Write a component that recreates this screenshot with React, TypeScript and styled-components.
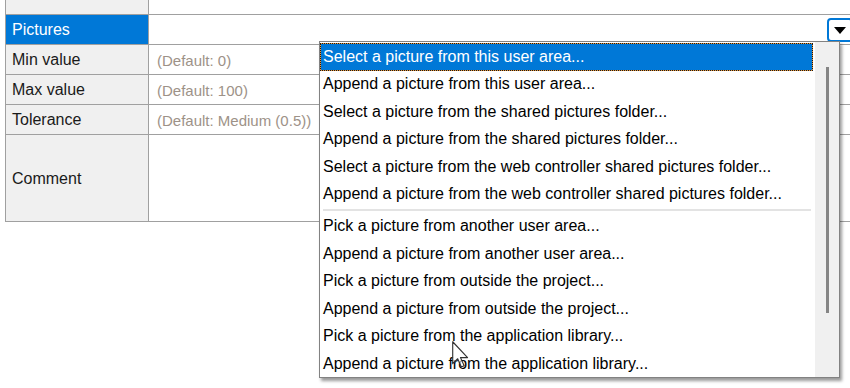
import React from "react";
import styled, { createGlobalStyle } from "styled-components";

const GlobalStyle = createGlobalStyle`
    html, body {
        margin: 0;
        padding: 0;
        background: #fff;
        overflow: hidden;
    }
    body {
        font-family: "Liberation Sans", Arial, sans-serif;
        font-size: 16px;
        color: #000;
    }
`;

const Page = styled.div`
    position: relative;
    width: 850px;
    height: 388px;
    overflow: hidden;
    background: #fff;
`;

const Grid = styled.div`
    margin-left: 5px;
    border-left: 1px solid #a0a0a0;
    display: flex;
    flex-direction: column;
`;

const Row = styled.div<{ $h: number }>`
    display: grid;
    grid-template-columns: 143px 1fr;
    height: ${(p) => p.$h}px;
    border-bottom: 1px solid #a0a0a0;
`;

const Label = styled.div<{ $selected?: boolean }>`
    display: flex;
    align-items: center;
    padding-left: 6px;
    padding-top: 1px;
    border-right: 1px solid #a0a0a0;
    background: ${(p) => (p.$selected ? "#0078d7" : "#f0f0f0")};
    color: ${(p) => (p.$selected ? "#fff" : "#1a1a1a")};
`;

const Value = styled.div`
    display: flex;
    align-items: center;
    justify-content: space-between;
    padding-left: 8px;
    padding-top: 1px;
    background: #fff;
    color: #9d9288;
    font-size: 15px;
    white-space: nowrap;
`;

const DropButton = styled.div`
    width: 22px;
    height: 20px;
    margin-right: -3px;
    border: 2px solid #0078d7;
    border-radius: 4px;
    background: #fff;
    display: flex;
    align-items: center;
    justify-content: center;
`;

const Popup = styled.div`
    position: absolute;
    left: 319px;
    top: 41px;
    width: 519px;
    height: 335px;
    border: 1px solid #828282;
    background: #fff;
    box-shadow: 2px 3px 3px rgba(0, 0, 0, 0.4);
    display: grid;
    grid-template-columns: 1fr 24px;
`;

const List = styled.div`
    display: flex;
    flex-direction: column;
    padding: 1px 2px 0 0;
    overflow: hidden;
`;

const Item = styled.div<{ $active?: boolean }>`
    height: 27.5px;
    flex: none;
    display: flex;
    align-items: center;
    padding-left: 3px;
    white-space: nowrap;
    background: ${(p) => (p.$active ? "#0078d7" : "transparent")};
    color: ${(p) => (p.$active ? "#fff" : "#000")};
    ${(p) =>
        p.$active
            ? `outline: 1px dotted #1a1a1a; outline-offset: -1px; box-shadow: inset 0 0 0 1px #e8973c;`
            : ""}
`;

const Separator = styled.div`
    flex: none;
    height: 4.25px;
    display: flex;
    align-items: center;
    margin: 0 2px 0 3px;
    &::after {
        content: "";
        flex: 1;
        height: 2px;
        background: #e3e3e3;
    }
`;

const ScrollTrack = styled.div`
    background: #f0f0f0;
    display: flex;
    justify-content: center;
    padding-top: 25px;
`;

const ScrollThumb = styled.div`
    width: 3px;
    height: 246px;
    background: #858585;
`;

const Cursor = styled.svg`
    position: absolute;
    left: 452px;
    top: 341px;
`;

const firstGroup = [
    "Select a picture from this user area...",
    "Append a picture from this user area...",
    "Select a picture from the shared pictures folder...",
    "Append a picture from the shared pictures folder...",
    "Select a picture from the web controller shared pictures folder...",
    "Append a picture from the web controller shared pictures folder...",
];

const secondGroup = [
    "Pick a picture from another user area...",
    "Append a picture from another user area...",
    "Pick a picture from outside the project...",
    "Append a picture from outside the project...",
    "Pick a picture from the application library...",
    "Append a picture from the application library...",
];

const props = [
    { label: "Min value", value: "(Default: 0)", h: 29 },
    { label: "Max value", value: "(Default: 100)", h: 29 },
    { label: "Tolerance", value: "(Default: Medium (0.5))", h: 29 },
    { label: "Comment", value: "", h: 86 },
];

export default function App() {
    return (
        <Page>
            <GlobalStyle />
            <Grid>
                <Row $h={14}>
                    <Label />
                    <Value />
                </Row>
                <Row $h={29}>
                    <Label $selected>Pictures</Label>
                    <Value>
                        <span />
                        <DropButton>
                            <svg width="12" height="7" viewBox="0 0 12 7">
                                <path d="M0 0 H12 L6 7 Z" fill="#000" />
                            </svg>
                        </DropButton>
                    </Value>
                </Row>
                {props.map((p) => (
                    <Row key={p.label} $h={p.h}>
                        <Label>{p.label}</Label>
                        <Value>{p.value}</Value>
                    </Row>
                ))}
            </Grid>

            <Popup>
                <List>
                    {firstGroup.map((t, i) => (
                        <Item key={t} $active={i === 0}>{t}</Item>
                    ))}
                    <Separator />
                    {secondGroup.map((t) => (
                        <Item key={t}>{t}</Item>
                    ))}
                </List>
                <ScrollTrack>
                    <ScrollThumb />
                </ScrollTrack>
            </Popup>

            <Cursor width="17" height="27" viewBox="0 0 12 19">
                <path
                    d="M0.5 0.5 V16 L4 12.5 L6.6 18.3 L8.6 17.4 L6 11.7 H11 Z"
                    fill="#fff"
                    fillOpacity="0.6"
                    stroke="#333"
                    strokeWidth="0.8"
                    strokeLinejoin="round"
                />
            </Cursor>
        </Page>
    );
}
